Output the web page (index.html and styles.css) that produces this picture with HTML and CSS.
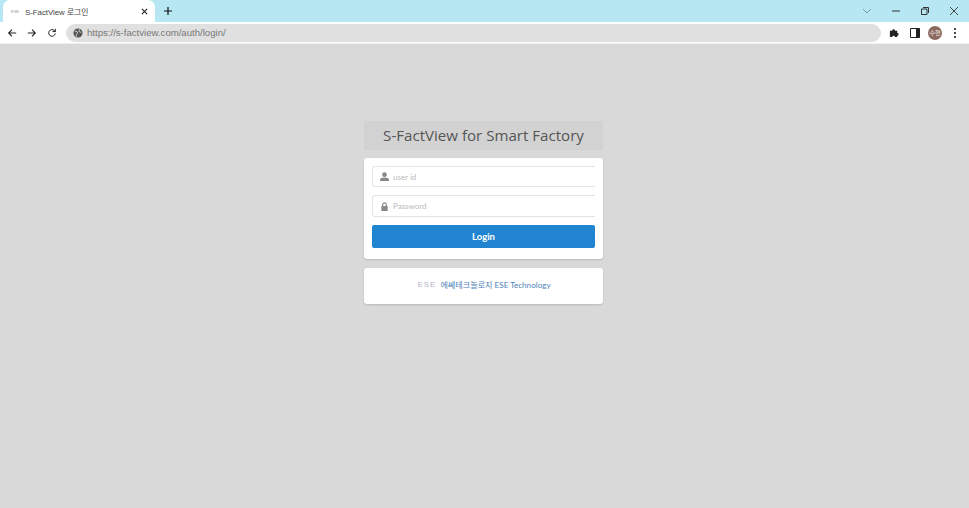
FILE: index.html
```html
<!DOCTYPE html>
<html lang="ko">
<head>
    <meta charset="UTF-8">
    <title>S-FactView 로그인</title>
    <link rel="stylesheet" href="styles.css">
</head>
<body>
<!-- Browser frame -->
<div class="tabstrip">
    <div class="tab">
        <span class="tab-icon">ESE</span>
        <span class="tab-title">S-FactView 로그인</span>
        <svg class="tab-close" viewBox="0 0 8 8" width="7" height="7"><path d="M1 1l6 6M7 1L1 7" stroke="#222" stroke-width="1.300"/></svg>
    </div>
    <svg class="new-tab" viewBox="0 0 10 10" width="8" height="8"><path d="M5 0v10M0 5h10" stroke="#111" stroke-width="1.500"/></svg>
    <div class="win-controls">
        <svg class="win-chevron" viewBox="0 0 10 6" width="10" height="6"><path d="M1 1l4 4 4-4" fill="none" stroke="#7d9aa3" stroke-width="1"/></svg>
        <svg viewBox="0 0 10 10" width="10" height="10"><path d="M1 5h8" stroke="#333" stroke-width="1"/></svg>
        <svg viewBox="0 0 10 10" width="10" height="10"><path d="M3 1.500h5.500V7M1.500 3h5.500v5.500H1.500z" fill="none" stroke="#333" stroke-width="1"/></svg>
        <svg viewBox="0 0 10 10" width="10" height="10"><path d="M1 1l8 8M9 1L1 9" stroke="#333" stroke-width="0.900"/></svg>
    </div>
</div>
<div class="toolbar">
    <svg class="nav-icon" viewBox="0 0 12 12" width="10" height="10"><path d="M11 6H2M6 2L2 6l4 4" fill="none" stroke="#222" stroke-width="1.300"/></svg>
    <svg class="nav-icon" viewBox="0 0 12 12" width="10" height="10"><path d="M1 6h9M6 2l4 4-4 4" fill="none" stroke="#222" stroke-width="1.300"/></svg>
    <svg class="nav-icon nav-last" viewBox="0 0 12 12" width="10" height="10"><path d="M10 6.500A4 4 0 1 1 8.800 3L10 4.200M10 1v3.300H6.700" fill="none" stroke="#222" stroke-width="1.200"/></svg>
    <div class="address">
        <svg viewBox="0 0 12 12" width="10" height="10"><circle cx="6" cy="6" r="5.500" fill="#555"/><path d="M2 3.500l3 1 .5 2-1.500 1v3M8 1.500L7 4l3 1.500" fill="none" stroke="#ddd" stroke-width="1"/></svg>
        <span class="url">https://s-factview.com/auth/login/</span>
    </div>
    <svg class="tool-icon" viewBox="0 0 12 12" width="11" height="11"><path d="M1 4h2.500a1.500 1.500 0 0 1 3 0H9v2.500a1.500 1.500 0 0 1 0 3V11H6.500a1.500 1.500 0 0 0-3 0H1z" fill="#222"/></svg>
    <svg class="tool-icon" viewBox="0 0 10 10" width="10" height="10"><path d="M.5.5h9v9h-9z" fill="#fff" stroke="#222"/><path d="M6 .5h3.500v9H6z" fill="#222"/></svg>
    <span class="avatar">수현</span>
    <svg class="tool-icon" viewBox="0 0 4 12" width="4" height="12"><circle cx="2" cy="2" r="1.100" fill="#222"/><circle cx="2" cy="6" r="1.100" fill="#222"/><circle cx="2" cy="10" r="1.100" fill="#222"/></svg>
</div>

<!-- Login page -->
<div class="page">
    <div class="login-box">
        <h1 class="login-title">S-FactView for Smart Factory</h1>
        <form class="card login-form">
            <label class="field">
                <svg viewBox="0 0 10 10" width="9" height="9"><circle cx="5" cy="3" r="2.600" fill="#888"/><path d="M0 10V8.500C0 7 2 6.200 5 6.200s5 .8 5 2.300V10z" fill="#888"/></svg>
                <input type="text" placeholder="user id">
            </label>
            <label class="field field-tall">
                <svg viewBox="0 0 10 10" width="9" height="9"><path d="M3 5V3a2 2 0 0 1 4 0v2" fill="none" stroke="#888" stroke-width="1.300"/><path d="M1.500 4.500h7V10h-7z" fill="#888"/></svg>
                <input type="password" placeholder="Password">
            </label>
            <button class="btn" type="button">Login</button>
        </form>
        <div class="card footer-card">
            <span class="logo">ESE</span>
            <a class="company">에쎄테크놀로지 ESE Technology</a>
        </div>
    </div>
</div>
</body>
</html>
```

FILE: styles.css
```css
* {
    box-sizing: border-box;
}

html, body {
    height: 100%;
}

body {
    margin: 0;
    display: flex;
    flex-direction: column;
    font-family: "Liberation Sans", "Noto Sans CJK KR", sans-serif;
    background-color: #d9d9d9;
}

/* browser frame */
.tabstrip {
    height: 22px;
    flex: none;
    display: flex;
    align-items: center;
    padding-left: 3px;
    background-color: #b6e7f3;
}

.tab {
    width: 152px;
    height: 22px;
    display: flex;
    align-items: center;
    padding: 0 7px 0 8px;
    background-color: #fff;
    border-radius: 7px 7px 0 0;
}

.tab-icon {
    width: 10px;
    font-size: 4px;
    color: #999;
}

.tab-title {
    flex: 1;
    margin-left: 4px;
    font-size: 7.800px;
    color: #444;
}

.new-tab {
    margin-left: 9px;
}

.win-controls {
    margin-left: auto;
    display: flex;
    align-items: center;
    gap: 19px;
    padding-right: 10px;
}

.toolbar {
    height: 22px;
    flex: none;
    display: flex;
    align-items: center;
    padding: 0 11px 0 7px;
    background-color: #fff;
    border-bottom: 1px solid #eee;
}

.nav-icon {
    margin-right: 10px;
}

.nav-last {
    margin-right: 9px;
}

.address {
    width: 815px;
    height: 18px;
    display: flex;
    align-items: center;
    gap: 4px;
    padding-left: 7px;
    background-color: #e0e0e0;
    border-radius: 9px;
}

.url {
    font-size: 9.600px;
    color: #777;
}

.tool-icon {
    flex: none;
}

.toolbar .tool-icon:nth-of-type(4) {
    margin-left: 8px;
}

.toolbar .tool-icon:nth-of-type(5) {
    margin-left: 10px;
}

.avatar {
    width: 14px;
    height: 14px;
    margin: 0 11px 0 8px;
    border-radius: 50%;
    background-color: #8d6a60;
    color: #eee;
    font-size: 6px;
    line-height: 14px;
    text-align: center;
}

/* login */
.page {
    flex: 1;
    display: flex;
    justify-content: center;
    padding: 77px 2px 0 0;
}

.login-box {
    width: 239px;
}

.login-title {
    height: 29px;
    margin: 0 0 8px;
    font-family: "Open Sans", sans-serif;
    font-size: 15.100px;
    font-weight: 400;
    line-height: 29px;
    text-align: center;
    color: #555;
    background-color: #d2d2d2;
}

.card {
    background-color: #fff;
    border-radius: 3px;
    box-shadow: 0 1px 2px rgba(0, 0, 0, 0.15);
}

.login-form {
    height: 101px;
    margin-bottom: 9px;
    padding: 8px;
    display: flex;
    flex-direction: column;
    gap: 8px;
}

.field {
    height: 21px;
    display: flex;
    align-items: center;
    padding-left: 7px;
    border: 1px solid #e4e4e4;
    border-right: none;
    border-radius: 3px 0 0 3px;
}

.field-tall {
    height: 22px;
}

.field input {
    flex: 1;
    min-width: 0;
    margin-left: 4px;
    padding: 0;
    border: none;
    outline: none;
    font-family: "Lato", sans-serif;
    font-size: 8px;
}

.field input::placeholder {
    color: #bbb;
}

.btn {
    height: 23px;
    border: none;
    border-radius: 2px;
    background-color: #2184d0;
    color: #fff;
    font-family: "Lato", sans-serif;
    font-size: 9.500px;
    font-weight: 700;
}

.footer-card {
    height: 36px;
    display: flex;
    align-items: center;
    justify-content: center;
    gap: 4px;
    padding: 0 0 3px 1px;
}

.logo {
    font-size: 8px;
    color: #b0b4c4;
    letter-spacing: 1px;
}

.company {
    font-family: "Lato", "Noto Sans CJK KR", sans-serif;
    font-size: 8.100px;
    color: #4d7fb8;
}
```
